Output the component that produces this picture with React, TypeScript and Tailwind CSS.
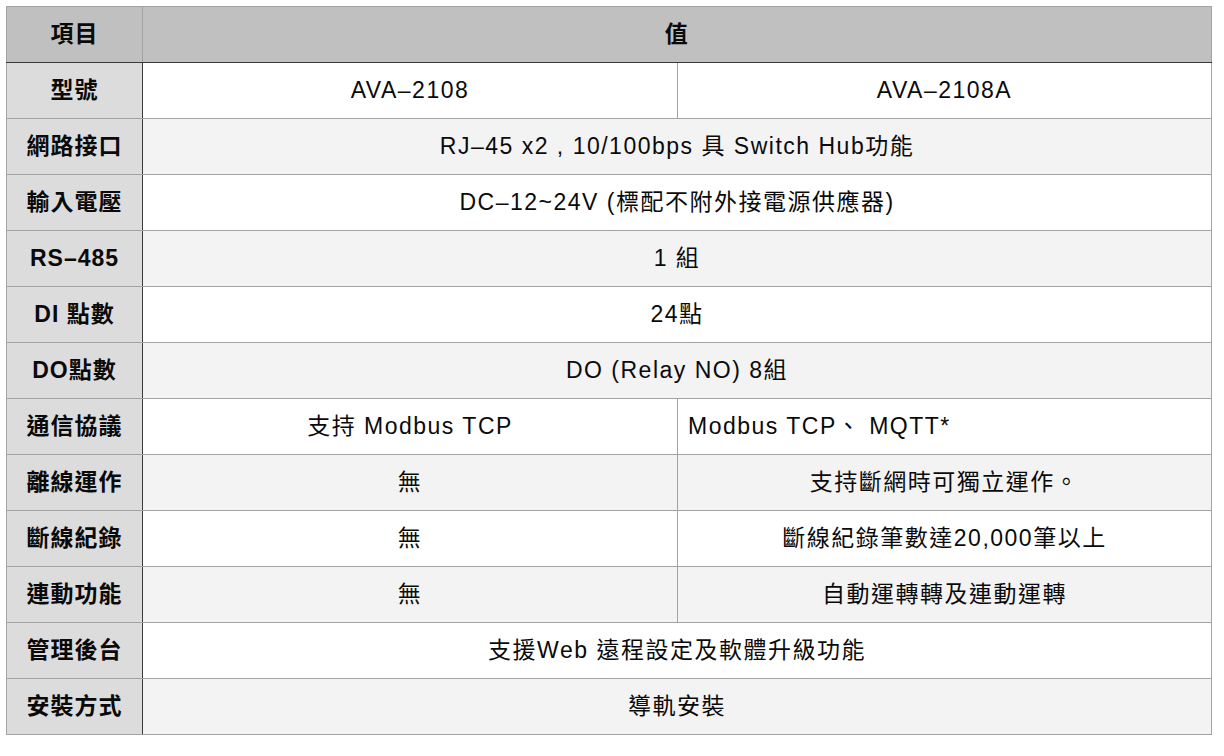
const rows: { label: string; a: string; b?: string; bLeft?: boolean }[] = [
  { label: "型號", a: "AVA–2108", b: "AVA–2108A" },
  { label: "網路接口", a: "RJ–45 x2 , 10/100bps 具 Switch Hub功能" },
  { label: "輸入電壓", a: "DC–12~24V (標配不附外接電源供應器)" },
  { label: "RS–485", a: "1 組" },
  { label: "DI 點數", a: "24點" },
  { label: "DO點數", a: "DO (Relay NO) 8組" },
  { label: "通信協議", a: "支持 Modbus TCP", b: "Modbus TCP、 MQTT*", bLeft: true },
  { label: "離線運作", a: "無", b: "支持斷網時可獨立運作。" },
  { label: "斷線紀錄", a: "無", b: "斷線紀錄筆數達20,000筆以上" },
  { label: "連動功能", a: "無", b: "自動運轉轉及連動運轉" },
  { label: "管理後台", a: "支援Web 遠程設定及軟體升級功能" },
  { label: "安裝方式", a: "導軌安裝" },
];

export default function App() {
  return (
    <div className="min-h-[756px] bg-white pl-[6px] pt-[6px] font-['Liberation_Sans','Noto_Sans_CJK_TC',sans-serif] text-[23px] tracking-[1.5px] text-[#0a0a0a]">
      <table className="w-[1205px] table-fixed border-collapse">
        <colgroup>
          <col className="w-[136px]" />
          <col className="w-[535px]" />
          <col className="w-[534px]" />
        </colgroup>
        <thead>
          <tr className="h-[56px] bg-[#bfc0bf]">
            <th className="border border-b-[#3a3a3a] border-[#a3a3a3] text-center font-bold tracking-[1px]">項目</th>
            <th colSpan={2} className="border border-b-[#3a3a3a] border-[#a3a3a3] text-center font-bold">
              值
            </th>
          </tr>
        </thead>
        <tbody>
          {rows.map((r, i) => (
            <tr key={r.label} className={i % 2 === 1 ? "h-[56px] bg-[#f3f3f3]" : "h-[56px] bg-white"}>
              <td className="border border-[#a3a3a3] border-r-[#3a3a3a] bg-[#dcdcdc] text-center font-bold tracking-[1px]">
                {r.label}
              </td>
              {r.b ? (
                <>
                  <td className="border border-[#a3a3a3] text-center">{r.a}</td>
                  <td className={r.bLeft ? "border border-[#a3a3a3] pl-[10px] text-left" : "border border-[#a3a3a3] text-center"}>
                    {r.b}
                  </td>
                </>
              ) : (
                <td colSpan={2} className="border border-[#a3a3a3] text-center">
                  {r.a}
                </td>
              )}
            </tr>
          ))}
        </tbody>
      </table>
    </div>
  );
}
